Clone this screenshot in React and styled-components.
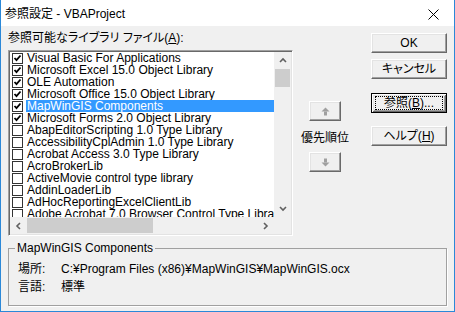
import styled, { createGlobalStyle } from 'styled-components';

const GlobalStyle = createGlobalStyle`
  html, body {
    margin: 0;
    padding: 0;
    background: #fff;
  }
  body {
    font-family: 'Liberation Sans', 'Noto Sans CJK JP', sans-serif;
    font-size: 12px;
    font-feature-settings: 'palt';
    color: #000;
  }
`;

const items = [
  { name: 'Visual Basic For Applications', checked: true },
  { name: 'Microsoft Excel 15.0 Object Library', checked: true },
  { name: 'OLE Automation', checked: true },
  { name: 'Microsoft Office 15.0 Object Library', checked: true },
  { name: 'MapWinGIS Components', checked: true, selected: true },
  { name: 'Microsoft Forms 2.0 Object Library', checked: true },
  { name: 'AbapEditorScripting 1.0 Type Library' },
  { name: 'AccessibilityCplAdmin 1.0 Type Library' },
  { name: 'Acrobat Access 3.0 Type Library' },
  { name: 'AcroBrokerLib' },
  { name: 'ActiveMovie control type library' },
  { name: 'AddinLoaderLib' },
  { name: 'AdHocReportingExcelClientLib' },
  { name: 'Adobe Acrobat 7.0 Browser Control Type Library' },
];

const Chevron = ({ dir }) => {
  const pts = {
    up: '1,5 4,2 7,5',
    down: '1,2 4,5 7,2',
    left: '5,1 2,4 5,7',
    right: '2,1 5,4 2,7',
  }[dir];
  return (
    <svg width='8' height='8' viewBox='0 0 8 8'>
      <polyline points={pts} fill='none' stroke='#606060' strokeWidth='1.6' />
    </svg>
  );
};

const MoveArrow = ({ down }) => (
  <svg width='9' height='9' viewBox='0 0 9 9' style={down ? { transform: 'rotate(180deg)' } : undefined}>
    <polygon points='4.5,0.5 8.5,4.5 0.5,4.5' fill='#a0a0a0' />
    <rect x='3' y='4.5' width='3' height='4' fill='#a0a0a0' />
  </svg>
);

const App = () => (
  <>
    <GlobalStyle />
    <Window>
      <TitleBar>
        <Title>参照設定 - VBAProject</Title>
        <CloseBox>
          <svg width='11' height='11' viewBox='0 0 11 11'>
            <path d='M0.5 0.5 L10.5 10.5 M10.5 0.5 L0.5 10.5' stroke='#000' strokeWidth='1' />
          </svg>
        </CloseBox>
      </TitleBar>
      <Body>
        <Top>
          <LeftCol>
            <Label>
              参照可能なライブラリ ファイル(<u>A</u>):
            </Label>
            <ListBox>
              <ListInner>
                <Rows>
                  {items.map((it) => (
                    <Row key={it.name}>
                      <CheckBox>
                        {it.checked && (
                          <svg width='9' height='9' viewBox='0 0 9 9'>
                            <polyline points='1.5,4 3.5,6.2 7.5,1.5' fill='none' stroke='#000' strokeWidth='1.8' />
                          </svg>
                        )}
                      </CheckBox>
                      <ItemText $selected={it.selected}>{it.name}</ItemText>
                    </Row>
                  ))}
                </Rows>
                <VScroll>
                  <ArrowCell><Chevron dir='up' /></ArrowCell>
                  <VTrack>
                    <VThumb />
                  </VTrack>
                  <ArrowCell><Chevron dir='down' /></ArrowCell>
                </VScroll>
                <HScroll>
                  <ArrowCell><Chevron dir='left' /></ArrowCell>
                  <HTrack>
                    <HThumb />
                  </HTrack>
                  <ArrowCell><Chevron dir='right' /></ArrowCell>
                </HScroll>
                <Corner />
              </ListInner>
            </ListBox>
          </LeftCol>

          <MidCol>
            <MoveButton><MoveArrow /></MoveButton>
            <Priority>優先順位</Priority>
            <MoveButton><MoveArrow down /></MoveButton>
          </MidCol>

          <RightCol>
            <Button>OK</Button>
            <Button $gap={6}>キャンセル</Button>
            <Button $gap={14} $default>
              <FocusRing>参照(<u>B</u>)...</FocusRing>
            </Button>
            <Button $gap={13}>ヘルプ(<u>H</u>)</Button>
          </RightCol>
        </Top>

        <Group>
          <Legend>MapWinGIS Components</Legend>
          <InfoRow>
            <span>場所:</span>
            <span>C:¥Program Files (x86)¥MapWinGIS¥MapWinGIS.ocx</span>
          </InfoRow>
          <InfoRow>
            <span>言語:</span>
            <span>標準</span>
          </InfoRow>
        </Group>
      </Body>
    </Window>
  </>
);

export default App;

const Window = styled.div`
  width: 455px;
  height: 312px;
  box-sizing: border-box;
  border: 1px solid #2b88d8;
  border-top: none;
  background: #f0f0f0;
  display: flex;
  flex-direction: column;
  overflow: hidden;
`;

const TitleBar = styled.div`
  height: 26px;
  flex: none;
  background: #fff;
  display: flex;
  align-items: center;
  justify-content: space-between;
  padding-left: 4px;
`;

const Title = styled.div`
  font-size: 12px;
  line-height: 16px;
  margin-top: 1px;
`;

const CloseBox = styled.div`
  width: 46px;
  height: 26px;
  display: flex;
  align-items: center;
  justify-content: center;
  margin-right: -2px;
  margin-top: 2px;
`;

const Body = styled.div`
  flex: 1;
  display: flex;
  flex-direction: column;
  padding: 5px 7px 5px 7px;
`;

const Top = styled.div`
  display: flex;
`;

const LeftCol = styled.div`
  width: 285px;
  display: flex;
  flex-direction: column;
`;

const Label = styled.div`
  height: 14px;
  line-height: 14px;
  margin-bottom: 5px;
  white-space: nowrap;
`;

const ListBox = styled.div`
  height: 186px;
  box-sizing: border-box;
  border: 1px solid;
  border-color: #a0a0a0 #fff #fff #a0a0a0;
  padding: 1px;
  box-shadow: inset 1px 1px #696969, inset -1px -1px #e3e3e3;
`;

const ListInner = styled.div`
  height: 100%;
  display: grid;
  grid-template-columns: 1fr 17px;
  grid-template-rows: 1fr 17px;
  background: #fff;
`;

const Rows = styled.div`
  overflow: hidden;
  padding-left: 2px;
`;

const Row = styled.div`
  height: 12px;
  display: flex;
`;

const CheckBox = styled.div`
  width: 11px;
  height: 11px;
  box-sizing: border-box;
  margin-top: 1px;
  border: 1px solid #333;
  background: #fff;
  display: flex;
  align-items: center;
  justify-content: center;
  flex: none;
`;

const ItemText = styled.div`
  flex: 1;
  margin-left: 3px;
  padding-left: 1px;
  line-height: 12px;
  white-space: nowrap;
  background: ${(p) => (p.$selected ? '#3399ff' : 'transparent')};
  color: ${(p) => (p.$selected ? '#fff' : '#000')};
`;

const VScroll = styled.div`
  background: #f0f0f0;
  display: flex;
  flex-direction: column;
`;

const HScroll = styled.div`
  background: #f0f0f0;
  display: flex;
`;

const ArrowCell = styled.div`
  width: 17px;
  height: 17px;
  flex: none;
  display: flex;
  align-items: center;
  justify-content: center;
`;

const VTrack = styled.div`
  flex: 1;
  padding: 0 1px;
`;

const VThumb = styled.div`
  height: 18px;
  background: #cdcdcd;
`;

const HTrack = styled.div`
  flex: 1;
  padding: 1px 0;
`;

const HThumb = styled.div`
  width: 126px;
  height: 100%;
  background: #cdcdcd;
`;

const Corner = styled.div`
  background: #f0f0f0;
`;

const MidCol = styled.div`
  width: 56px;
  margin-left: 4px;
  padding-top: 70px;
  display: flex;
  flex-direction: column;
  align-items: center;
`;

const bevel = `
  box-sizing: border-box;
  background: #f0f0f0;
  border: 1px solid;
  border-color: #fff #696969 #696969 #fff;
  box-shadow: inset -1px -1px #a0a0a0, inset 1px 1px #e3e3e3;
`;

const MoveButton = styled.div`
  ${bevel}
  width: 32px;
  height: 20px;
  display: flex;
  align-items: center;
  justify-content: center;
`;

const Priority = styled.div`
  font-family: 'Noto Sans CJK JP', sans-serif;
  font-size: 12px;
  line-height: 14px;
  margin: 9px 0 8px;
`;

const RightCol = styled.div`
  width: 76px;
  margin-left: 18px;
  padding-top: 2px;
  display: flex;
  flex-direction: column;
`;

const Button = styled.div`
  ${bevel}
  height: 20px;
  margin-top: ${(p) => p.$gap || 0}px;
  display: flex;
  align-items: center;
  justify-content: center;
  line-height: 14px;
  ${(p) =>
    p.$default &&
    `
    border: 1px solid #000;
    box-shadow: inset 1px 1px #fff, inset -1px -1px #696969, inset 2px 2px #e3e3e3, inset -2px -2px #a0a0a0;
  `}
`;

const FocusRing = styled.span`
  flex: 1;
  margin: 0 3px;
  height: 12px;
  border: 1px dotted #000;
  display: flex;
  align-items: center;
  justify-content: center;
`;

const Group = styled.fieldset`
  margin: 5px 0 0;
  padding: 5px 6px 9px;
  border: 1px solid #a0a0a0;
  box-shadow: 1px 1px #fff;
  min-width: 0;
`;

const Legend = styled.legend`
  padding: 0 2px;
  line-height: 14px;
`;

const InfoRow = styled.div`
  display: grid;
  grid-template-columns: 43px 1fr;
  height: 18px;
  line-height: 18px;
  margin-left: 3px;
  white-space: nowrap;
`;
